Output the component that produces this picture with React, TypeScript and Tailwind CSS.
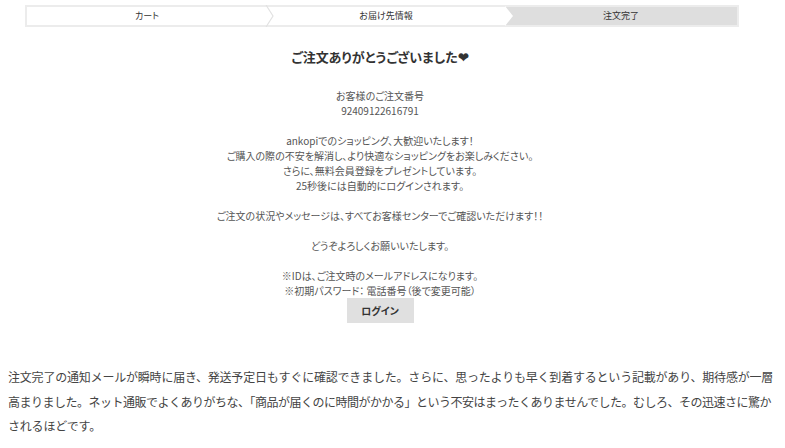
import React from "react";

export default function App() {
  return (
    <div
      className="w-[785px] h-[448px] bg-white overflow-hidden text-[#555]"
      style={{ fontFamily: '"Noto Sans CJK JP", "Noto Sans", sans-serif' }}
    >
      <div className="pt-[5px] pl-[25px]" style={{ fontFeatureSettings: '"palt"' }}>
        <div className="flex w-[714px] h-[22px] border-2 border-[#ececec] text-[9px] text-[#333]">
          <div className="w-[240px] flex items-center justify-center">カート</div>
          <div className="relative w-[238px] flex items-center justify-center">
            <svg className="absolute left-[-2px] top-[-2px]" width="10" height="22" viewBox="0 0 10 22">
              <path d="M1 0 L8 11 L1 22" fill="none" stroke="#e2e2e2" strokeWidth="1.2" />
            </svg>
            お届け先情報
          </div>
          <div className="relative flex-1 bg-[#dedede] flex items-center justify-center">
            <svg className="absolute left-0 top-[-1px]" width="10" height="20" viewBox="0 0 10 20">
              <path d="M0 0 L8 10 L0 20 Z" fill="#ffffff" />
            </svg>
            注文完了
          </div>
        </div>
      </div>

      <div className="w-[760px] flex flex-col items-center" style={{ fontFeatureSettings: '"palt"' }}>
        <div className="mt-[20px] h-[20px] leading-[20px] text-[13px] font-bold text-[#333]">
          ご注文ありがとうございました❤
        </div>
        <div className="mt-[21px] text-[10px] leading-[15px] text-center text-[#555]">
          お客様のご注文番号
          <br />
          92409122616791
          <br />
          <br />
          ankopiでのショッピング、大歓迎いたします！
          <br />
          ご購入の際の不安を解消し、より快適なショッピングをお楽しみください。
          <br />
          さらに、無料会員登録をプレゼントしています。
          <br />
          25秒後には自動的にログインされます。
          <br />
          <br />
          ご注文の状況やメッセージは、すべてお客様センターでご確認いただけます！！
          <br />
          <br />
          どうぞよろしくお願いいたします。
          <br />
          <br />
          ※IDは、ご注文時のメールアドレスになります。
          <br />
          ※初期パスワード： 電話番号（後で変更可能）
        </div>
        <button className="w-[67px] h-[25px] bg-[#e0e0e0] text-[10px] font-bold text-[#333]">
          ログイン
        </button>
      </div>

      <div className="mt-[42px] pl-[8px] text-[12px] leading-[24.5px] text-[#444] whitespace-nowrap">
        <span className="tracking-[-0.2px]">
          注文完了の通知メールが瞬時に届き、発送予定日もすぐに確認できました。さらに、思ったよりも早く到着するという記載があり、期待感が一層
        </span>
        <br />
        <span className="tracking-[-0.5px]">
          高まりました。ネット通販でよくありがちな、「商品が届くのに時間がかかる」という不安はまったくありませんでした。むしろ、その迅速さに驚か
        </span>
        <br />
        <span className="tracking-[-0.2px]">されるほどです。</span>
      </div>
    </div>
  );
}
